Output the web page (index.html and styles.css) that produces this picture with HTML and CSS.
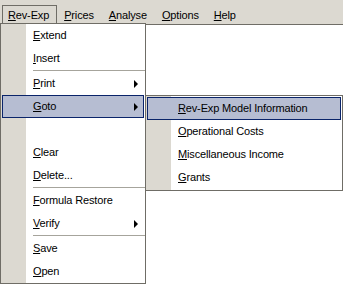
FILE: index.html
```html
<!DOCTYPE html>
<html lang="en">
<head>
    <meta charset="UTF-8">
    <title>Rev-Exp Menu</title>
    <link rel="stylesheet" href="styles.css">
</head>
<body>

    <div class="menubar">
        <div class="top-item open"><u>R</u>ev-Exp</div>
        <div class="top-item"><u>P</u>rices</div>
        <div class="top-item"><u>A</u>nalyse</div>
        <div class="top-item"><u>O</u>ptions</div>
        <div class="top-item"><u>H</u>elp</div>
    </div>

    <div class="menu main-menu">
        <div class="item"><u>E</u>xtend</div>
        <div class="item"><u>I</u>nsert</div>
        <div class="sep"></div>
        <div class="item has-sub"><u>P</u>rint<span class="arrow"></span></div>
        <div class="item has-sub active"><u>G</u>oto<span class="arrow"></span>
            <div class="menu sub-menu">
                <div class="item active"><u>R</u>ev-Exp Model Information</div>
                <div class="item"><u>O</u>perational Costs</div>
                <div class="item"><u>M</u>iscellaneous Income</div>
                <div class="item"><u>G</u>rants</div>
            </div>
        </div>
        <div class="item"></div>
        <div class="item"><u>C</u>lear</div>
        <div class="item"><u>D</u>elete...</div>
        <div class="sep"></div>
        <div class="item"><u>F</u>ormula Restore</div>
        <div class="item has-sub"><u>V</u>erify<span class="arrow"></span></div>
        <div class="sep"></div>
        <div class="item"><u>S</u>ave</div>
        <div class="item"><u>O</u>pen</div>
    </div>

</body>
</html>
```

FILE: styles.css
```css
body {
    font-family: "Liberation Sans", Arial, sans-serif;
    font-size: 11px;
    letter-spacing: -0.15px;
    color: #000;
    background-color: #fff;
    margin: 0;
    padding: 0;
    position: relative;
    height: 284px;
    overflow: hidden;
}
u {
    text-decoration: underline;
    text-underline-offset: 1px;
}
.menubar {
    display: flex;
    align-items: flex-end;
    height: 25px;
    padding-left: 2px;
    background-color: #dcd9d1;
    border-bottom: 1px solid #6f6d66;
    box-sizing: border-box;
}
.top-item {
    height: 18px;
    line-height: 18px;
    padding: 0 7px 0 5px;
    margin-right: 1px;
    border: 1px solid transparent;
    border-bottom: none;
}
.top-item.open {
    border-color: #6f6d66;
    background-color: #dcd9d1;
}
.menu {
    position: absolute;
    background: linear-gradient(to right, #dcd9d1 25px, #fff 25px);
    border: 1px solid #6f6d66;
    box-sizing: border-box;
}
.main-menu {
    left: 0;
    top: 23px;
    width: 146px;
}
.item {
    position: relative;
    height: 23px;
    line-height: 21px;
    margin: 0 1px;
    padding-left: 30px;
    border: 1px solid transparent;
    box-sizing: border-box;
    white-space: nowrap;
}
.item.active {
    background-color: #b6bdd2;
    border-color: #0a246a;
}
.arrow {
    position: absolute;
    right: 5px;
    top: 7px;
    width: 0;
    height: 0;
    border-left: 4px solid #000;
    border-top: 4px solid transparent;
    border-bottom: 4px solid transparent;
}
.sep {
    height: 2px;
    margin-left: 32px;
    border-top: 1px solid #a6a49c;
    box-sizing: border-box;
}
.sub-menu {
    left: 142px;
    top: -1px;
    width: 198px;
    padding-top: 1px;
    padding-bottom: 1px;
}
```
